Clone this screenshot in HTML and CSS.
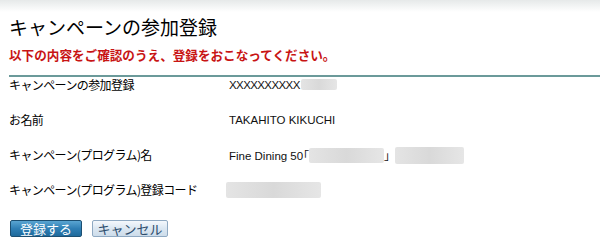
FILE: index.html
```html
<!DOCTYPE html>
<html lang="ja">
<head>
    <meta charset="utf-8">
    <title>キャンペーンの参加登録</title>
    <link rel="stylesheet" href="styles.css">
</head>
<body>
    <div class="topbar"></div>
    <div class="container">
        <div class="title">キャンペーンの参加登録</div>
        <p class="notice">以下の内容をご確認のうえ、登録をおこなってください。</p>

        <div class="confirm">
            <div class="row">
                <span class="label">キャンペーンの参加登録</span>
                <span class="value value-id">XXXXXXXXXX<span class="mask mask-id"></span></span>
            </div>
            <div class="row">
                <span class="label">お名前</span>
                <span class="value">TAKAHITO KIKUCHI</span>
            </div>
            <div class="row">
                <span class="label">キャンペーン(プログラム)名</span>
                <span class="value">Fine Dining 50<span class="kakko">「</span><span class="mask mask-name"></span><span class="kakko">」</span><span class="mask mask-sub"></span></span>
            </div>
            <div class="row">
                <span class="label">キャンペーン(プログラム)登録コード</span>
                <span class="value"><span class="mask mask-code"></span></span>
            </div>
        </div>

        <div class="buttons">
            <button class="btn btn-submit">登録する</button>
            <button class="btn btn-cancel">キャンセル</button>
        </div>
    </div>
</body>
</html>
```

FILE: styles.css
```css
/* ページ全体 */
body {
    margin: 0;
    background-color: #fff;
    color: #000;
    font-family: "Liberation Sans", "Noto Sans CJK JP", sans-serif;
    font-size: 12px;
}

/* 上部のグラデーション */
.topbar {
    height: 12px;
    background: linear-gradient(#e6e9e9, #fff);
}

.container {
    padding-left: 9px;
}

/* 見出し */
.title {
    font-family: "Noto Sans CJK JP", sans-serif;
    font-size: 19px;
    line-height: 28px;
    margin-top: 1px;
}

.notice {
    font-family: "Noto Sans CJK JP", sans-serif;
    color: #c81414;
    font-size: 12.6px;
    font-weight: bold;
    margin: 5px 0 0 0;
    line-height: 18px;
    padding-bottom: 11px;
    border-bottom: 2px solid #6b9a9a;
}

/* 確認欄 */
.row {
    display: flex;
    height: 35px;
    line-height: 14px;
    padding-top: 1px;
    box-sizing: border-box;
}

.label {
    width: 220px;
    flex-shrink: 0;
    font-family: "Noto Sans CJK JP", sans-serif;
    letter-spacing: -0.6px;
}

.value {
    font-size: 11.5px;
    color: #111;
    white-space: nowrap;
}

.value-id {
    letter-spacing: -0.6px;
}

/* かぎ括弧は半角幅で表示 */
.kakko {
    font-family: "Noto Sans CJK JP", sans-serif;
    font-feature-settings: "halt";
}

/* ぼかし部分 */
.mask {
    display: inline-block;
    vertical-align: middle;
    background: linear-gradient(90deg, #e4e4e4, #d9d9d9 50%, #e6e6e6);
    border-radius: 2px;
}

.mask-id {
    width: 36px;
    height: 11px;
    margin-top: -3px;
    margin-left: 1px;
}

.mask-name {
    width: 75px;
    height: 15px;
    margin-top: -3px;
}

.mask-sub {
    width: 69px;
    height: 17px;
    margin-left: 5px;
    margin-top: -3px;
}

.mask-code {
    width: 95px;
    height: 16px;
    margin-left: -3px;
    margin-top: -2px;
}

/* ボタン */
.buttons {
    margin-top: 3px;
    display: flex;
    gap: 10px;
    padding-left: 1px;
}

.btn {
    font-family: "Noto Sans CJK JP", sans-serif;
    font-size: 13px;
    line-height: 15px;
    height: 17px;
    padding: 0;
    border-radius: 2px;
}

.btn-submit {
    width: 72px;
    color: #fff;
    border: 1px solid #1c4f72;
    background: linear-gradient(#5aa5d2, #2f7fb5 50%, #1f6a9c);
}

.btn-cancel {
    width: 76px;
    color: #2c4c6c;
    border: 1px solid #8fa9c2;
    background: linear-gradient(#f4f8fc, #dbe7f2 50%, #cddcea);
}
```
